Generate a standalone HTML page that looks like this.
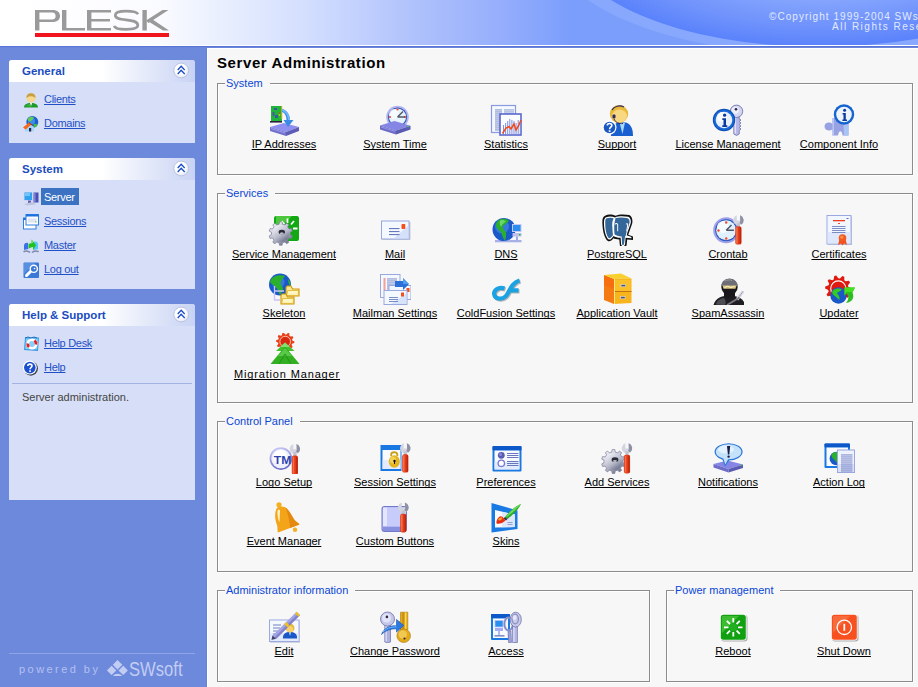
<!DOCTYPE html>
<html><head><meta charset="utf-8">
<style>
*{margin:0;padding:0;box-sizing:border-box}
html,body{width:918px;height:687px;overflow:hidden;background:#6d89dc;font-family:"Liberation Sans",sans-serif;font-size:11px;position:relative;text-decoration-skip-ink:none}
.abs{position:absolute}
#content{position:absolute;left:207px;top:48px;width:711px;height:639px;background:#f7f7f7;border-top:1px solid #fff;border-left:1px solid #fff}
.box{position:absolute;left:9px;width:186px;background:#d6dff7;border-radius:3px 3px 0 0}
.bh{position:absolute;left:0;top:0;width:186px;height:22px;background:linear-gradient(90deg,#fff 0,#fff 50%,#c8d3f4 100%);border-radius:3px 3px 0 0}
.bt{position:absolute;left:13px;top:4px;font-weight:bold;color:#1a4cc0;font-size:11.5px;line-height:14px}
.btn{position:absolute;left:164px;top:2px;width:17px;height:17px}
.lk{position:absolute;left:35px;color:#1f50c5;text-decoration:underline;text-decoration-skip-ink:none;line-height:13px;white-space:nowrap;letter-spacing:-0.3px}
.ic16{position:absolute;left:14px;width:16px;height:16px}
.ic16 svg{display:block}
.fs{position:absolute;border:1px solid #8c8c8c;box-shadow:inset 1px 1px 0 #fff, 1px 1px 0 #fff}
.lg{position:absolute;top:-7px;left:7px;padding:0 7px 0 1px;background:#f7f7f7;color:#0b46d6;line-height:12px;white-space:nowrap}
.ic{position:absolute;width:32px;height:32px}
.ic svg{display:block}
.lb{position:absolute;width:160px;text-align:center;color:#000;text-decoration:underline;text-decoration-skip-ink:none;line-height:13px;white-space:nowrap}
</style></head><body>
<svg class="abs" style="left:0;top:0" width="918" height="48" viewBox="0 0 918 48">
<defs>
<linearGradient id="hg" x1="0" y1="0" x2="918" y2="0" gradientUnits="userSpaceOnUse">
<stop offset="0" stop-color="#ffffff"/>
<stop offset="0.174" stop-color="#fafbff"/>
<stop offset="0.218" stop-color="#eff3fe"/>
<stop offset="0.327" stop-color="#d5e0fe"/>
<stop offset="0.436" stop-color="#b4c5fc"/>
<stop offset="0.545" stop-color="#96aefc"/>
<stop offset="0.62" stop-color="#7b9efc"/>
<stop offset="1" stop-color="#7b9efa"/>
</linearGradient>
<radialGradient id="dk" gradientUnits="userSpaceOnUse" cx="820" cy="-60" r="252.5" gradientTransform="translate(820,-60) scale(1,0.4234) translate(-820,60)">
<stop offset="0.55" stop-color="#85a5fd"/>
<stop offset="0.8" stop-color="#7093fc"/>
<stop offset="1" stop-color="#5a82fb"/>
</radialGradient>
</defs>
<rect width="918" height="45" fill="url(#hg)"/>
<ellipse cx="820" cy="-60" rx="272" ry="115" fill="#87a8fd"/>
<ellipse cx="820" cy="-60" rx="252.5" ry="106.9" fill="url(#dk)"/>
<rect y="45" width="918" height="1" fill="#ffffff"/>
<rect y="46" width="918" height="1" fill="#5b74d7"/>
<rect y="47" width="918" height="1" fill="#6a86dc"/>
<g fill="#9a9a9a">
<path fill-rule="evenodd" d="M35,10 H52.5 C57.6,10 60,12.6 60,16 C60,19.4 57.6,22 52.5,22 H39.4 V30.5 H35 Z M39.4,12.4 H52 C54.8,12.4 55.6,14 55.6,16 C55.6,18 54.8,19.6 52,19.6 H39.4 Z"/>
<path d="M62,10 H66.4 V28 H85 V30.5 H62 Z"/>
<path d="M87,10 H111 V12.5 H91.4 V19 H110 V21.5 H91.4 V28 H111 V30.5 H87 Z"/>
<path d="M142.4,10 H146.8 V30.5 H142.4 Z"/>
<path d="M146,20.5 L162.5,10 L168.5,10 L148.5,23 Z"/>
<path d="M151.5,18.8 L169,30.5 L163,30.5 L148.5,21.5 Z"/>
</g>
<path d="M138,14.2 C137,11.8 132,11.2 126,11.2 C119.5,11.2 115.3,12 115.3,15.2 C115.3,18.6 119.5,19.2 126,19.9 C132.5,20.6 137.8,21.4 137.8,25.2 C137.8,28.6 133,29.3 126,29.3 C119.5,29.3 115,28.8 114.2,25.8" fill="none" stroke="#9a9a9a" stroke-width="2.7"/>
<rect x="35" y="33" width="134" height="4" fill="#f0141e"/>
</svg>
<div class="abs" style="left:769px;top:11px;color:#e2eaff;font-size:10px;line-height:12px;letter-spacing:1.05px;white-space:nowrap">©Copyright 1999-2004 SWsoft, Inc.</div>
<div class="abs" style="left:832px;top:21px;color:#e2eaff;font-size:10px;line-height:12px;letter-spacing:1.5px;white-space:nowrap">All Rights Reserved.</div>
<div class="box" style="top:60px;height:83px">
 <div class="bh"><div class="bt">General</div><div class="btn"><svg width="17" height="17" viewBox="0 0 17 17"><defs><radialGradient id="bg1" cx="0.42" cy="0.38" r="0.62"><stop offset="0.55" stop-color="#fff"/><stop offset="1" stop-color="#e4e8f6"/></radialGradient></defs><circle cx="8.2" cy="8.5" r="7.4" fill="url(#bg1)" stroke="#b4bedd" stroke-width="0.9"/><path d="M4.7,8 L8.2,4.3 L11.7,8 M4.7,12 L8.2,8.3 L11.7,12" fill="none" stroke="#1a4cc8" stroke-width="1.3"/></svg></div></div>
<div class="ic16" style="top:32px"><svg width="16" height="16" viewBox="0 0 16 16"><path d="M1,15.5 C1,12.5 3.5,11 8,11 C12.5,11 15,12.5 15,15.5 Z" fill="#1e9a2a"/><path d="M3,14 C4,12.5 6,12 8,12 L8,15 Z" fill="#50c050" opacity="0.6"/><path d="M7,11 L9,11 L8.2,14 Z" fill="#ffffff"/><circle cx="8" cy="6" r="4.6" fill="#f6d890"/><path d="M3.4,6 C3.4,2.5 5.5,1.2 8,1.2 C10.5,1.2 12.6,2.5 12.6,6 C11,4.5 9,4 7,4.2 C5.5,4.5 4.5,5 3.4,6 Z" fill="#c8a040"/></svg></div><span class="lk" style="top:33px">Clients</span>
<div class="ic16" style="top:56px"><svg width="16" height="16" viewBox="0 0 16 16"><circle cx="9.3" cy="6" r="6" fill="#1a60d0"/><circle cx="8.5" cy="5" r="3.5" fill="#50a0f0" opacity="0.7"/><path d="M6,1.5 C8,0.5 10,0.5 11,1.5 C10,3 9,4 8,5 C7,6 5,5 4.5,3.5 Z" fill="#60d050"/><path d="M10.5,8 C12,7.5 13.5,8 14.5,9 C13.5,11 12,11.5 11,11 Z" fill="#40c040"/><path d="M0.5,11.5 L6,7 L11,11 L11,15.5 L2,15.5 L2,11 Z" fill="#a8d4f8"/><path d="M0,11.5 L6,6.5 L8.5,8.5 L2.5,13.5 Z" fill="#f46818"/><path d="M6,6.5 L9.5,9.5" stroke="#b02810" stroke-width="1"/><rect x="6" y="12" width="2.2" height="3.5" fill="#202850"/></svg></div><span class="lk" style="top:57px">Domains</span>
</div>
<div class="box" style="top:158px;height:131px">
 <div class="bh"><div class="bt">System</div><div class="btn"><svg width="17" height="17" viewBox="0 0 17 17"><defs><radialGradient id="bg2" cx="0.42" cy="0.38" r="0.62"><stop offset="0.55" stop-color="#fff"/><stop offset="1" stop-color="#e4e8f6"/></radialGradient></defs><circle cx="8.2" cy="8.5" r="7.4" fill="url(#bg2)" stroke="#b4bedd" stroke-width="0.9"/><path d="M4.7,8 L8.2,4.3 L11.7,8 M4.7,12 L8.2,8.3 L11.7,12" fill="none" stroke="#1a4cc8" stroke-width="1.3"/></svg></div></div>
<div class="ic16" style="top:32px"><svg width="16" height="16" viewBox="0 0 16 16"><rect x="0.8" y="2" width="9" height="9" fill="#d0d4e8"/><rect x="1.5" y="2.5" width="7.5" height="7.5" fill="#30a0f0"/><rect x="2" y="3" width="5" height="3" fill="#80d0f8" opacity="0.8"/><rect x="10.5" y="2.5" width="5" height="10" fill="#4a50b8"/><rect x="11" y="3" width="1.5" height="9" fill="#8088d8"/><rect x="5" y="10.5" width="3" height="3" fill="#5860c0"/><path d="M1,14 L9,12 L13,14.5 L4,15.5 Z" fill="#c0c4dc"/></svg></div><span class="abs" style="left:32px;top:30px;width:38px;height:17px;background:#3b73c2"></span><span class="lk" style="top:33px;color:#fff;text-decoration:none">Server</span>
<div class="ic16" style="top:56px"><svg width="16" height="16" viewBox="0 0 16 16"><rect x="0.5" y="4" width="12.5" height="11" fill="#ffffff" stroke="#2a80e0" stroke-width="1"/><rect x="0.5" y="4" width="2.5" height="2" fill="#1a70e0"/><rect x="3" y="0.5" width="12.5" height="10.5" fill="#fdfdff" stroke="#2a80e0" stroke-width="1"/><rect x="3" y="0.5" width="12.5" height="2" fill="#1a70e0"/><rect x="5" y="4.5" width="8.5" height="4" fill="#e0e4f4"/><rect x="12" y="7" width="1.5" height="1.5" fill="#90d890"/></svg></div><span class="lk" style="top:57px">Sessions</span>
<div class="ic16" style="top:80px"><svg width="16" height="16" viewBox="0 0 16 16"><path d="M1,8 C1,5 3,4.5 5,5 L5,11 L1,12 Z" fill="#3a70e8"/><path d="M11,3.5 C13,3.5 15,4 15,6 L15,11 L11,12 Z" fill="#50c8f8"/><path d="M0.5,14 C2,12.5 5,12.5 7,14.5" fill="none" stroke="#8088b0" stroke-width="1.5"/><path d="M9,14.5 C11,12.5 14,12.5 15.5,14" fill="none" stroke="#8088b0" stroke-width="1.5"/><path d="M8.5,1.5 L13,7 L10,12.5 L10,9 C8,9 6.5,10 5.5,11 L5.5,6 C6.5,5.5 8,5 10,5 Z" fill="#20c020"/><path d="M8.5,1.5 L10.5,4 L8,6 Z" fill="#60e050"/></svg></div><span class="lk" style="top:81px">Master</span>
<div class="ic16" style="top:104px"><svg width="16" height="16" viewBox="0 0 16 16"><rect x="0.5" y="0.5" width="15.5" height="15.5" rx="1" fill="#3a78d8"/><path d="M1,1 L12,1 L1,12 Z" fill="#6aa0e8" opacity="0.6"/><circle cx="10.8" cy="6.8" r="3.6" fill="none" stroke="#ffffff" stroke-width="1.4"/><circle cx="11.5" cy="6.5" r="0.8" fill="#ffffff"/><path d="M8.5,9.5 L4,14 C3,14.5 2.5,14 3,13 L7.5,8.5" fill="none" stroke="#ffffff" stroke-width="1.6"/></svg></div><span class="lk" style="top:105px">Log out</span>
</div>
<div class="box" style="top:304px;height:196px">
 <div class="bh"><div class="bt">Help &amp; Support</div><div class="btn"><svg width="17" height="17" viewBox="0 0 17 17"><defs><radialGradient id="bg3" cx="0.42" cy="0.38" r="0.62"><stop offset="0.55" stop-color="#fff"/><stop offset="1" stop-color="#e4e8f6"/></radialGradient></defs><circle cx="8.2" cy="8.5" r="7.4" fill="url(#bg3)" stroke="#b4bedd" stroke-width="0.9"/><path d="M4.7,8 L8.2,4.3 L11.7,8 M4.7,12 L8.2,8.3 L11.7,12" fill="none" stroke="#1a4cc8" stroke-width="1.3"/></svg></div></div>
<div class="ic16" style="top:32px"><svg width="16" height="16" viewBox="0 0 16 16"><path d="M2,1.5 L16,1.5 L15,15 L1,14 Z" fill="#3a98e0"/><path d="M3,2.5 L15,2.5 L14.2,13.5 L2.2,13 Z" fill="#88d0f8"/><path d="M2,2 L5,1 L8,2 L11,1 L14,2" stroke="#1a70c0" stroke-width="1" fill="none"/><circle cx="9" cy="8" r="4.2" fill="none" stroke="#ffffff" stroke-width="2.6"/><path d="M11.5,4.5 A4.2,4.2 0 0 1 13,8.5 M6,11 A4.2,4.2 0 0 1 4.8,7.5" fill="none" stroke="#f01818" stroke-width="2.6"/></svg></div><span class="lk" style="top:33px">Help Desk</span>
<div class="ic16" style="top:56px"><svg width="16" height="16" viewBox="0 0 16 16"><circle cx="7.8" cy="8.5" r="7.2" fill="#404858"/><circle cx="6.8" cy="7.6" r="7" fill="#ffffff"/><circle cx="6.8" cy="7.6" r="5.8" fill="#1a50d0"/><path d="M4.8,6 C4.8,3.5 9,3.5 9,5.8 C9,7.5 7,7.5 7,9.3" fill="none" stroke="#ffffff" stroke-width="1.6"/><rect x="6.2" y="10.3" width="1.7" height="1.6" fill="#ffffff"/></svg></div><span class="lk" style="top:57px">Help</span>
 <div class="abs" style="left:3px;top:79px;width:180px;height:1px;background:#a3b4e3"></div>
 <div class="abs" style="left:13px;top:87px;color:#444;line-height:13px">Server administration.</div>
</div>
<div class="abs" style="left:9px;top:653px;width:186px;height:1px;background:#8ea4e6"></div>
<div class="abs" style="left:19px;top:662px;color:#b2c0f0;font-size:11px;line-height:14px;letter-spacing:2.45px;white-space:nowrap">powered by</div>
<svg class="abs" style="left:104px;top:656px" width="84" height="24" viewBox="0 0 84 24"><g fill="#c2cdf4"><path d="M13.5,4 L18.3,8.7 L13.5,13.4 L8.8,8.7 Z"/><path d="M7.6,9.7 L12.3,14.4 L7.6,19.1 L2.9,14.4 Z"/><path d="M19.2,9.7 L23.9,14.4 L19.2,19.1 L14.5,14.4 Z"/><path d="M9,20 C11,17 16,17 18,20 Z"/></g><text x="25" y="19.8" font-family="Liberation Sans" font-size="20" fill="#c2cdf4" textLength="53.5" lengthAdjust="spacingAndGlyphs">SWsoft</text></svg>
<div id="content"></div><div class="abs" style="left:206px;top:48px;width:1px;height:639px;background:#6483da"></div>
<div class="abs" style="left:217px;top:54px;font-size:15px;font-weight:bold;color:#000;line-height:17px;letter-spacing:0.6px">Server Administration</div>
<div class="fs" style="left:217px;top:83px;width:696px;height:92px"><span class="lg">System</span></div>
<div class="fs" style="left:217px;top:193px;width:696px;height:210px"><span class="lg">Services</span></div>
<div class="fs" style="left:217px;top:421px;width:696px;height:151px"><span class="lg">Control Panel</span></div>
<div class="fs" style="left:217px;top:590px;width:433px;height:92px"><span class="lg">Administrator information</span></div>
<div class="fs" style="left:666px;top:590px;width:247px;height:92px"><span class="lg">Power management</span></div>
<div class="ic" style="left:268px;top:104px"><svg width="32" height="32" viewBox="0 0 32 32"><path d="M2,23 L16,19 L31,23 L18,28 Z" fill="#8e8ff0"/><path d="M2,23 L18,28 L18,32 L2,27 Z" fill="#7070cc"/><path d="M18,28 L31,23 L31,27 L18,32 Z" fill="#5d5db8"/><path d="M3,24.5 L17,29" stroke="#a8a8f0" stroke-width="0.8"/><rect x="3" y="2" width="11" height="15" fill="#1fb53a"/><rect x="13.3" y="2" width="1" height="13" fill="#f0b020"/><rect x="6" y="4" width="3" height="2" fill="#3a5aa0"/><rect x="4.5" y="8" width="2" height="4" fill="#4a5aa0"/><rect x="7" y="11" width="3" height="3" fill="#3a5aa0"/><circle cx="11.5" cy="9" r="0.8" fill="#e04020"/><circle cx="11.5" cy="11" r="0.8" fill="#f0e020"/><rect x="2" y="17" width="12" height="1.6" fill="#302040"/><path d="M14,5 C19,6 22,11 22,16 L25.5,16 L20,23 L15.5,16 L18.5,16 C18.5,12 17,9 14,8 Z" fill="#3b8be6"/><path d="M14,5 C19,6 22,11 22,16 L20,16 C20,11 17,8 14,7 Z" fill="#6fb6f8"/></svg></div>
<div class="lb" style="left:204px;top:138px;">IP Addresses</div>
<div class="ic" style="left:379px;top:104px"><svg width="32" height="32" viewBox="0 0 32 32"><circle cx="18.5" cy="13" r="11.3" fill="#b4b6ee"/><circle cx="18.5" cy="13" r="9.6" fill="#2f55b8"/><circle cx="18.5" cy="13" r="8.6" fill="#e6f2fc"/><circle cx="15" cy="10" r="5" fill="#ffffff" opacity="0.7"/><circle cx="18.5" cy="5.5" r="1.1" fill="#f04a2a"/><circle cx="11" cy="13" r="1.1" fill="#f04a2a"/><circle cx="26" cy="13" r="1.1" fill="#e04a2a"/><path d="M18.5,13 L24,7.5 M18.5,13 L26,13" stroke="#505868" stroke-width="1.4"/><path d="M1,21.5 L15.5,17 L31.5,21.8 L17,26.5 Z" fill="#8585e6"/><path d="M1,21.5 L17,26.5 L17,30.5 L1,25.5 Z" fill="#6d6dc8"/><path d="M17,26.5 L31.5,21.8 L31.5,25.5 L17,30.5 Z" fill="#5a5ab2"/><path d="M2,23 L16,27.3" stroke="#a0a0ee" stroke-width="0.8"/><circle cx="29" cy="22.5" r="0.8" fill="#40d040"/></svg></div>
<div class="lb" style="left:315px;top:138px;">System Time</div>
<div class="ic" style="left:490px;top:104px"><svg width="32" height="32" viewBox="0 0 32 32"><rect x="1.5" y="1.5" width="24" height="27" fill="#f4f8ff" stroke="#8a9ae0" stroke-width="1.2"/><rect x="5" y="5.5" width="7" height="0.9" fill="#7080c0"/><rect x="5" y="7.5" width="7" height="0.9" fill="#7080c0"/><rect x="5" y="9.5" width="7" height="0.9" fill="#7080c0"/><rect x="5" y="11.5" width="7" height="0.9" fill="#7080c0"/><rect x="5" y="13.5" width="7" height="0.9" fill="#7080c0"/><rect x="5" y="15.5" width="7" height="0.9" fill="#7080c0"/><rect x="5" y="17.5" width="7" height="0.9" fill="#7080c0"/><rect x="5" y="19.5" width="7" height="0.9" fill="#7080c0"/><rect x="5" y="21.5" width="7" height="0.9" fill="#7080c0"/><rect x="5" y="23.5" width="7" height="0.9" fill="#7080c0"/><rect x="5" y="25.5" width="7" height="0.9" fill="#7080c0"/><rect x="14" y="5.5" width="10" height="0.9" fill="#8090c8"/><rect x="14" y="7.5" width="10" height="0.9" fill="#8090c8"/><rect x="14" y="9.5" width="10" height="0.9" fill="#8090c8"/><rect x="10" y="10" width="21" height="21" fill="#fbfcff" stroke="#5a68d0" stroke-width="1.6"/><rect x="13.0" y="21" width="1" height="9" fill="#7f8fe0"/><rect x="15.1" y="19" width="1" height="11" fill="#7f8fe0"/><rect x="17.2" y="17" width="1" height="13" fill="#7f8fe0"/><rect x="19.3" y="15" width="1" height="15" fill="#7f8fe0"/><rect x="21.4" y="16" width="1" height="14" fill="#7f8fe0"/><rect x="23.5" y="17" width="1" height="13" fill="#7f8fe0"/><rect x="25.6" y="19" width="1" height="11" fill="#7f8fe0"/><rect x="27.700000000000003" y="16" width="1" height="14" fill="#7f8fe0"/><rect x="29.8" y="18" width="1" height="12" fill="#7f8fe0"/><rect x="31.900000000000002" y="21" width="1" height="9" fill="#7f8fe0"/><rect x="34.0" y="15" width="1" height="15" fill="#7f8fe0"/><rect x="36.1" y="18" width="1" height="12" fill="#7f8fe0"/><path d="M12.5,29.5 L16,24 L19,22.5 L21,25 L24,20 L26,26 L28.5,22 L31,16" fill="none" stroke="#f04a1a" stroke-width="1.5"/></svg></div>
<div class="lb" style="left:426px;top:138px;">Statistics</div>
<div class="ic" style="left:601px;top:104px"><svg width="32" height="32" viewBox="0 0 32 32"><path d="M10,32 C10,22 14,18 21,18 C28,18 32,22 32,32 Z" fill="#1a5fcf"/><path d="M18.5,18.5 L24,18.5 L21.5,30 Z" fill="#a8d8f8"/><ellipse cx="18" cy="10" rx="9.2" ry="9" fill="#e8b838"/><ellipse cx="18.5" cy="12" rx="7.5" ry="6.5" fill="#f8d880"/><path d="M11,6 C13,2 19,1 23,3" fill="none" stroke="#302860" stroke-width="1.2"/><rect x="11.5" y="10.5" width="3" height="4" rx="1" fill="#302860"/><path d="M13,15 C15,19 18,20 22,19.5" fill="none" stroke="#302860" stroke-width="1"/><circle cx="8.5" cy="23.5" r="7" fill="#ffffff"/><circle cx="8.5" cy="23.5" r="5.8" fill="#1a58c0"/><path d="M6.3,21.5 C6.3,18.8 10.8,18.8 10.8,21.5 C10.8,23.3 8.6,23.2 8.6,25.2" fill="none" stroke="#fff" stroke-width="1.6"/><rect x="7.7" y="26.3" width="1.8" height="1.6" fill="#fff"/></svg></div>
<div class="lb" style="left:537px;top:138px;">Support</div>
<div class="ic" style="left:712px;top:104px"><svg width="32" height="32" viewBox="0 0 32 32"><path d="M21.8,12 L27.2,12 L27.2,15 L29,16 L27.2,17.5 L29,19 L27.2,20.5 L29,22 L27.2,23.5 L29,25 L27.2,26.5 L27.2,30 L24.5,31.5 L21.8,30 Z" fill="#b6b9e6" stroke="#6a6ea6" stroke-width="0.8"/><rect x="22.6" y="12.5" width="1.3" height="17" fill="#e4e6fa"/><circle cx="24.5" cy="7.3" r="6.2" fill="#d4d6f2" stroke="#7074aa" stroke-width="0.9"/><circle cx="23.3" cy="6.3" r="3.6" fill="#eeeefc"/><circle cx="24" cy="5.3" r="1.3" fill="#2a2a40"/><circle cx="12" cy="16" r="11.2" fill="#0d4fb8"/><circle cx="12" cy="16" r="10.2" fill="#1a6ad8"/><circle cx="12" cy="16" r="8.3" fill="#e8f0fc"/><circle cx="10" cy="13" r="5" fill="#ffffff" opacity="0.8"/><circle cx="12.6" cy="11.2" r="1.6" fill="#0a3aa0"/><path d="M10.3,14.3 L14,14.3 L14,21.3 L15.3,21.3 L15.3,22.9 L10.3,22.9 L10.3,21.3 L11.5,21.3 L11.5,15.9 L10.3,15.9 Z" fill="#0a3aa0"/></svg></div>
<div class="lb" style="left:648px;top:138px;">License Management</div>
<div class="ic" style="left:823px;top:104px"><svg width="32" height="32" viewBox="0 0 32 32"><path d="M9.5,14 L25.5,14 L25.5,31.5 L19.5,31.5 C19.5,27 16,25 15,31.5 L9.5,31.5 L9.5,25.5 C6,28 1.5,26 1.5,22.5 C1.5,19 6,17 9.5,20 Z" fill="#98a2e2"/><path d="M9.5,14 L11,14 L11,31.5 L9.5,31.5 Z" fill="#b8c4f4"/><path d="M20.5,20 L25.5,20 L25.5,31.5 L21,31.5 Z" fill="#a8c4f4"/><circle cx="21" cy="10.5" r="10.2" fill="#1565d0"/><circle cx="21" cy="10.5" r="7.8" fill="#eef4fc"/><circle cx="21.6" cy="6.2" r="1.5" fill="#0a3aa0"/><path d="M19.6,9 L22.8,9 L22.8,15.5 L24,15.5 L24,16.9 L19.4,16.9 L19.4,15.5 L20.5,15.5 L20.5,10.4 L19.6,10.4 Z" fill="#0a3aa0"/></svg></div>
<div class="lb" style="left:759px;top:138px;">Component Info</div>
<div class="ic" style="left:268px;top:214px"><svg width="32" height="32" viewBox="0 0 32 32"><rect x="5.5" y="1.5" width="26" height="26" rx="2.5" fill="#ffffff"/><rect x="6" y="2" width="25" height="25" rx="2" fill="#12a812"/><path d="M8,2 L24,2 L8,18 Z" fill="#5cd04a" opacity="0.8"/><path d="M19.5,4.5 L19.5,9 M13.5,7 L16.5,10.5 M26,7 L23,10.5 M25,14.5 L29.5,14.5" stroke="#ffffff" stroke-width="1.8"/><defs><linearGradient id="g_svc" x1="0.2" y1="0.1" x2="0.8" y2="0.95"><stop offset="0" stop-color="#ececf4"/><stop offset="0.55" stop-color="#b8bacb"/><stop offset="1" stop-color="#6c6e88"/></linearGradient></defs><polygon points="11.14,10.15 11.47,7.78 14.13,7.78 14.46,10.15 16.95,10.96 18.61,9.23 20.77,10.80 19.64,12.91 21.18,15.03 23.54,14.61 24.36,17.14 22.21,18.19 22.21,20.81 24.36,21.86 23.54,24.39 21.18,23.97 19.64,26.09 20.77,28.20 18.61,29.77 16.95,28.04 14.46,28.85 14.13,31.22 11.47,31.22 11.14,28.85 8.65,28.04 6.99,29.77 4.83,28.20 5.96,26.09 4.42,23.97 2.06,24.39 1.24,21.86 3.39,20.81 3.39,18.19 1.24,17.14 2.06,14.61 4.42,15.03 5.96,12.91 4.83,10.80 6.99,9.23 8.65,10.96" fill="url(#g_svc)" stroke="#7a7c96" stroke-width="0.7"/><circle cx="12.8" cy="19.5" r="8.5" fill="url(#g_svc)"/><ellipse cx="13.8" cy="18.0" rx="3.2" ry="2.2" fill="#2a2a38"/><ellipse cx="13.8" cy="19.21" rx="1.92" ry="0.66" fill="#f4f4fa"/></svg></div>
<div class="lb" style="left:204px;top:248px;">Service Management</div>
<div class="ic" style="left:379px;top:214px"><svg width="32" height="32" viewBox="0 0 32 32"><rect x="3.5" y="8" width="28" height="18" fill="#b0b4c8" opacity="0.6"/><rect x="2.5" y="7" width="27.5" height="18" fill="#f4f8ff" stroke="#98a6dc" stroke-width="1"/><path d="M14,25 L30,25 L30,11 Z" fill="#c8d6f8" opacity="0.7"/><rect x="22.5" y="10" width="3.8" height="5" rx="0.8" fill="#f4501e"/><rect x="10" y="14" width="10.5" height="1.1" fill="#6878b8"/><rect x="10" y="17" width="10.5" height="1.1" fill="#6878b8"/><rect x="10" y="20" width="10.5" height="1.1" fill="#6878b8"/></svg></div>
<div class="lb" style="left:315px;top:248px;">Mail</div>
<div class="ic" style="left:490px;top:214px"><svg width="32" height="32" viewBox="0 0 32 32"><rect x="5" y="26" width="26.5" height="2.3" fill="#a8b0e8"/><circle cx="14" cy="15.5" r="11.5" fill="#1a5ac8"/><circle cx="12" cy="12.5" r="7" fill="#4a90e8" opacity="0.6"/><path d="M9,6 C12,4 17,4.5 19,7 C17,9 16,10 14,11 C12,12 13,15 15,17 C17,19 16,23 15,27 C13,24 12,21 11,18 C9,16 7,15 6,12 C6,9 7,7 9,6 Z" fill="#2ab02a"/><path d="M10,6.5 C12,5.5 15,6 16,7.5 C14,9 12,10 11,13 C10,11 9,9 10,6.5 Z" fill="#7ee07a" opacity="0.8"/><rect x="22" y="10" width="9.5" height="8" fill="#c4c8f4"/><rect x="23" y="11" width="7.5" height="6" fill="#2a8ef0"/><rect x="22.5" y="19" width="9" height="3.5" fill="#c0c0f0"/><rect x="29" y="20" width="1.5" height="1.5" fill="#20c020"/><rect x="26" y="22.5" width="2" height="4" fill="#a0a8e0"/></svg></div>
<div class="lb" style="left:426px;top:248px;">DNS</div>
<div class="ic" style="left:601px;top:214px"><svg width="32" height="32" viewBox="0 0 32 32"><g transform="translate(-1.27,-2.37) scale(1.056,1.158)"><path d="M5,3.5 C8,2 12,2.5 15,3.5 C18,2.2 24,2.2 28,3 C31,4.5 31.5,8 30.5,11 C29.5,14 28,17 27,20 L31.5,21.5 L31.5,24.5 L26,24 L25.5,28.5 C25,32 19.5,32.5 19,28.5 L18.5,24 C16,24 14,23.5 13,23 C11.5,25 9.5,26 8,25.5 C4,23.5 2.5,15 2.5,9 C2.5,6 3,4.5 5,3.5 Z" fill="#111"/><path d="M6,4.8 C9,3.8 12,4 14.5,5 C17.5,3.8 23,3.8 27,4.5 C29.5,5.5 30,8.5 29,11 C28,14 26.5,17 25.5,20.5 L30,22 L30,23 L24.5,22.5 L24,28 C23.7,30.5 20.5,30.5 20.2,28 L19.8,22.5 C17,22.5 14.5,22 13,21 C11.5,23.5 9.5,24.5 8.5,24 C5.5,22 4,15 4,9.5 C4,7 4.5,5.5 6,4.8 Z" fill="#ffffff"/><path d="M6.5,5.8 C9,5 11.5,5.2 13.2,5.8 C12,8 11.5,10 12,14 C12,16.5 12.5,19 12.5,20.5 C11,22.5 9.5,23.3 8.8,23 C6.3,21 5.2,15 5.2,9.8 C5.2,7.5 5.5,6.3 6.5,5.8 Z" fill="#336699"/><path d="M15,5.6 C19,4.8 23,5 26.5,5.7 C28.5,6.5 28.7,9 27.8,11 C26.8,14 25.2,17.5 24.5,21.2 L24,21.2 L23,28 C22.8,29.3 21.3,29.3 21.1,28 L20.8,21.5 C18,21.3 15,20.5 14,19.5 C13.5,15 13.5,10 15,5.6 Z" fill="#336699"/><path d="M14.5,11 C15,10 16.5,10 17,11 L17,17 M25,11 C25.5,10 26.5,10.5 26.5,11.5 L25.5,17" fill="none" stroke="#ffffff" stroke-width="0.9"/></g></svg></div>
<div class="lb" style="left:537px;top:248px;">PostgreSQL</div>
<div class="ic" style="left:712px;top:214px"><svg width="32" height="32" viewBox="0 0 32 32"><circle cx="14.2" cy="16.3" r="13" fill="#9ea0ec"/><circle cx="14.2" cy="16.3" r="11" fill="#2a58b8"/><circle cx="14.2" cy="16.3" r="10" fill="#e0f0fc"/><circle cx="11" cy="13" r="6" fill="#ffffff" opacity="0.7"/><circle cx="14.2" cy="8.5" r="1.2" fill="#f04a2a"/><circle cx="6.5" cy="16.5" r="1.2" fill="#f04a2a"/><circle cx="14.2" cy="24.5" r="1.2" fill="#f04a2a"/><path d="M14.2,16.3 L19.5,11 M14.2,16.3 L22,16.3" stroke="#505868" stroke-width="1.5"/><path d="M24.80,1.35 A5.2,5.2 0 1 0 28.00,1.35 L28.00,6.60 L24.80,6.60 Z" fill="#d4d5e0"/><path d="M28.00,1.35 A5.2,5.2 0 0 1 29.52,10.46 L27.400000000000002,8.90 A3.12,3.12 0 0 0 28.20,6.00 Z" fill="#8e90a4"/><rect x="24.80" y="9.42" width="3.2" height="3.88" fill="#c0c2d0"/><rect x="23.3" y="12.3" width="6.2" height="18.3" rx="2.2" fill="#e03c18"/><rect x="24.1" y="13.3" width="1.6" height="16.3" fill="#f87a58" opacity="0.8"/><rect x="27.700000000000003" y="13.3" width="1.4" height="16.3" fill="#b02010" opacity="0.8"/></svg></div>
<div class="lb" style="left:648px;top:248px;">Crontab</div>
<div class="ic" style="left:823px;top:214px"><svg width="32" height="32" viewBox="0 0 32 32"><rect x="5" y="2.5" width="24" height="28.5" fill="#a4a8c8" opacity="0.6"/><rect x="4" y="1.5" width="24" height="28.5" fill="#f2f6fe" stroke="#9aaae0" stroke-width="1"/><path d="M4.5,18 L27.5,18 L27.5,29.5 L4.5,29.5 Z" fill="#d8e4fa" opacity="0.8"/><rect x="10" y="6" width="12" height="1.3" fill="#f03a1a"/><rect x="15" y="9" width="2" height="1" fill="#f04a2a"/><rect x="23.5" y="4" width="2" height="1" fill="#6070c0"/><rect x="9" y="12" width="13.5" height="0.9" fill="#7080c0"/><rect x="9" y="14" width="13.5" height="0.9" fill="#7080c0"/><rect x="9" y="16" width="13.5" height="0.9" fill="#7080c0"/><rect x="9" y="18" width="13.5" height="0.9" fill="#7080c0"/><path d="M16.5,25 L15,31 L18,29.5 L19.5,31.5 L21,29.5 L24,31 L22.5,25 Z" fill="#f0501e"/><circle cx="19.5" cy="24" r="3.8" fill="#f25a20"/><circle cx="18.8" cy="23.2" r="1.6" fill="#f89040"/></svg></div>
<div class="lb" style="left:759px;top:248px;">Certificates</div>
<div class="ic" style="left:268px;top:273px"><svg width="32" height="32" viewBox="0 0 32 32"><circle cx="12" cy="11.5" r="11" fill="#1a5ac8"/><circle cx="10" cy="9" r="6.5" fill="#4a90e8" opacity="0.6"/><path d="M5,4.5 C8,2 13,1.5 17,3 C16,5 14,6 13,8 C12,10 13,13 15,15 C15,18 13,20 12,22 C10,19 10,16 8,14 C6,12 3,11 2,9 C2.5,7 3.5,5.5 5,4.5 Z" fill="#2ab02a"/><path d="M20,6 C22,8 23,11 22.5,13 C21,12 20,9 20,6 Z" fill="#2ab02a"/><path d="M6.5,13 L6.5,27 L12,27 M6.5,18 L16,18" fill="none" stroke="#c8c4f8" stroke-width="1.3"/><path d="M18,14.5 L18,23 L31,23 L31,16 L24.5,16 L23,13 L19,13 Z" fill="#fbe890" stroke="#d09808" stroke-width="1.1"/><path d="M18.6,22.4 L19.8,17.5 L30.4,17.5 L30.4,22.4 Z" fill="#fff6c0" stroke="#d8a818" stroke-width="0.7"/><path d="M13,22.5 L13,31 L26,31 L26,24 L19.5,24 L18,21 L14,21 Z" fill="#fbe890" stroke="#d09808" stroke-width="1.1"/><path d="M13.6,30.4 L14.8,25.5 L25.4,25.5 L25.4,30.4 Z" fill="#fff6c0" stroke="#d8a818" stroke-width="0.7"/></svg></div>
<div class="lb" style="left:204px;top:307px;">Skeleton</div>
<div class="ic" style="left:379px;top:273px"><svg width="32" height="32" viewBox="0 0 32 32"><rect x="1.5" y="1.5" width="19.5" height="23" fill="#f4f8ff" stroke="#9aa8e0" stroke-width="1"/><rect x="4.5" y="5.5" width="2" height="1" fill="#f04a2a"/><rect x="8" y="5.5" width="10" height="0.9" fill="#7080c0"/><rect x="4.5" y="7.5" width="2" height="1" fill="#f04a2a"/><rect x="8" y="7.5" width="10" height="0.9" fill="#7080c0"/><rect x="4.5" y="9.5" width="2" height="1" fill="#f04a2a"/><rect x="8" y="9.5" width="10" height="0.9" fill="#7080c0"/><rect x="4.5" y="11.5" width="2" height="1" fill="#f04a2a"/><rect x="8" y="11.5" width="10" height="0.9" fill="#7080c0"/><rect x="4.5" y="13.5" width="2" height="1" fill="#f04a2a"/><rect x="8" y="13.5" width="10" height="0.9" fill="#7080c0"/><rect x="4.5" y="15.5" width="2" height="1" fill="#f04a2a"/><rect x="8" y="15.5" width="10" height="0.9" fill="#7080c0"/><rect x="10" y="12.5" width="22" height="14" fill="#f2f6ff" stroke="#9aa8e0" stroke-width="1"/><rect x="27.5" y="15" width="3" height="4" fill="#f4501e"/><path d="M16,8 L24,8 L24,5 L30,11 L24,17 L24,14 L16,14 Z" fill="#2a70d8"/><path d="M24,5 L30,11 L24,11 Z" fill="#60b0f8" opacity="0.7"/><rect x="5" y="17.5" width="23" height="14" fill="#f4f8ff" stroke="#9aa8e0" stroke-width="1"/><path d="M12,31 L27.5,31 L27.5,20 Z" fill="#d0dcfa" opacity="0.8"/><rect x="22" y="19.5" width="3" height="4" fill="#f4501e"/><rect x="10" y="24" width="9" height="0.9" fill="#7080c0"/><rect x="10" y="26" width="9" height="0.9" fill="#7080c0"/><rect x="10" y="28" width="9" height="0.9" fill="#7080c0"/></svg></div>
<div class="lb" style="left:315px;top:307px;">Mailman Settings</div>
<div class="ic" style="left:490px;top:273px"><svg width="32" height="32" viewBox="0 0 32 32"><g transform="translate(1,1)" opacity="0.45"><path d="M14.5,15.5 C8,13.5 3.5,17.5 4.2,21.5 C5,26.5 12,26.5 15.5,23.5 C19.5,20 20.5,10 29.5,7.5 M19.5,17.3 L28.5,17.3" fill="none" stroke="#606060" stroke-width="4.2"/></g><path d="M14.5,15.5 C8,13.5 3.5,17.5 4.2,21.5 C5,26.5 12,26.5 15.5,23.5 C19.5,20 20.5,10 29.5,7.5 M19.5,17.3 L28.5,17.3" fill="none" stroke="#1ba2e2" stroke-width="4.2"/></svg></div>
<div class="lb" style="left:426px;top:307px;">ColdFusion Settings</div>
<div class="ic" style="left:601px;top:273px"><svg width="32" height="32" viewBox="0 0 32 32"><path d="M3,2 L13,6 L13,31 L3,27 Z" fill="#f47a14"/><path d="M3,2 L13,6 L13,16 L3,12 Z" fill="#f86a10" opacity="0.7"/><path d="M3,2 L20,0.5 L30.5,5.5 L13,6 Z" fill="#f8d030"/><path d="M13,6 L30.5,5.5 L30.5,30 L13,31 Z" fill="#f8b41c"/><path d="M14,7 L29.5,6.8 L29.5,18 L14,18.3 Z" fill="#fac028"/><rect x="13" y="18" width="17.5" height="1" fill="#c87010"/><rect x="13" y="6" width="1" height="25" fill="#ffe880"/><rect x="20" y="11.5" width="4.6" height="2.3" fill="#505070" stroke="#e0e0f0" stroke-width="0.6"/><rect x="19.7" y="23.5" width="4.4" height="2.3" fill="#505070" stroke="#e0e0f0" stroke-width="0.6"/></svg></div>
<div class="lb" style="left:537px;top:307px;">Application Vault</div>
<div class="ic" style="left:712px;top:273px"><svg width="32" height="32" viewBox="0 0 32 32"><path d="M1.5,32 C3,26 8,23.5 13,23 L22,23 C28,23.5 32,27 33,32 Z" fill="#1e1e22"/><path d="M4,31.5 C5,27.5 8,25.5 12,25 C14,27 14,30 13,32 Z" fill="#606068" opacity="0.7"/><rect x="12" y="18" width="11" height="7" fill="#1a1a1e"/><circle cx="17.5" cy="14" r="8.2" fill="#18181c"/><path d="M9.4,13 C9.6,8 13,5.8 17.5,5.8 C22,5.8 25.5,8.5 25.6,13 Z" fill="#6e6e76"/><path d="M12,8 C14,6.8 18,6.5 20,7.5" stroke="#9a9aa2" stroke-width="1" fill="none"/><path d="M10.5,12.5 L24.5,12.5 L23.5,15.8 L11.5,15.8 Z" fill="#d8c080"/><path d="M12.5,14.5 L15.5,13.3 L19,14.5 L22.5,13.3" stroke="#fff4c8" stroke-width="1" fill="none"/><path d="M31,18.5 L25,26.5" stroke="#dcdce6" stroke-width="3"/><path d="M31,18.5 L25,26.5" stroke="#70708a" stroke-width="1" stroke-dasharray="1.2,1.2"/><path d="M15,32 L27.5,24.5" stroke="#707080" stroke-width="2"/><path d="M15,32 L27.5,24.5" stroke="#b8a070" stroke-width="0.6" stroke-dasharray="1,2"/></svg></div>
<div class="lb" style="left:648px;top:307px;">SpamAssassin</div>
<div class="ic" style="left:823px;top:273px"><svg width="32" height="32" viewBox="0 0 32 32"><polygon points="28.50,15.50 28.34,17.56 25.00,18.65 24.39,20.13 25.98,23.26 24.63,24.83 21.30,23.75 19.93,24.59 19.38,28.05 17.36,28.54 15.30,25.70 13.70,25.57 11.22,28.05 9.31,27.26 9.30,23.75 8.09,22.71 4.62,23.26 3.54,21.49 5.60,18.65 5.23,17.10 2.10,15.50 2.26,13.44 5.60,12.35 6.21,10.87 4.62,7.74 5.97,6.17 9.30,7.25 10.67,6.41 11.22,2.95 13.24,2.46 15.30,5.30 16.90,5.43 19.38,2.95 21.29,3.74 21.30,7.25 22.51,8.29 25.98,7.74 27.06,9.51 25.00,12.35 25.37,13.90" fill="#e01a10"/><circle cx="15.3" cy="15.5" r="9.399999999999999" fill="#e01a10"/><circle cx="12.240000000000002" cy="12.440000000000001" r="5.1" fill="#e01a10" opacity="0"/><circle cx="15.3" cy="15.5" r="0" fill="#e01a10"/><circle cx="15.3" cy="15.5" r="7.6" fill="none" stroke="#ffffff" stroke-width="1.1"/><circle cx="15.5" cy="22.5" r="8.2" fill="#1a58c8"/><path d="M10,17.5 C13,15 17,15 19,16.5 C17,18.5 15,19 14,20 C15,22 17,23 16.5,27 C14,25 12,23 10,21.5 C9,20 9,18.5 10,17.5 Z" fill="#33cc22"/><path d="M21.5,14.5 L32,14.5 L29.5,19.5 C31.5,24 30,29 23,30 C26,27 26,23 23.5,20.5 L21.5,23 Z" fill="#2ebd20"/><path d="M21.5,14.5 L32,14.5 L29.5,19 L23.5,19 L21.5,22 Z" fill="#44e020"/></svg></div>
<div class="lb" style="left:759px;top:307px;">Updater</div>
<div class="ic" style="left:268px;top:333px"><svg width="32" height="32" viewBox="0 0 32 32"><polygon points="26.40,8.60 26.29,10.04 24.05,10.82 23.62,11.87 24.64,14.01 23.71,15.11 21.43,14.42 20.47,15.02 20.04,17.35 18.64,17.69 17.20,15.80 16.07,15.71 14.36,17.35 13.02,16.80 12.97,14.42 12.11,13.69 9.76,14.01 9.00,12.78 10.35,10.82 10.09,9.73 8.00,8.60 8.11,7.16 10.35,6.38 10.78,5.33 9.76,3.19 10.69,2.09 12.97,2.78 13.93,2.18 14.36,-0.15 15.76,-0.49 17.20,1.40 18.33,1.49 20.04,-0.15 21.38,0.40 21.43,2.78 22.29,3.51 24.64,3.19 25.40,4.42 24.05,6.38 24.31,7.47" fill="#e8401a"/><circle cx="17.2" cy="8.6" r="6.4" fill="#e8401a"/><circle cx="15.04" cy="6.4399999999999995" r="3.6" fill="#e8401a" opacity="0"/><circle cx="17.2" cy="8.6" r="0" fill="#e8401a"/><circle cx="17.2" cy="8.6" r="5.3" fill="#d82810" stroke="#f8c8b8" stroke-width="0.9"/><path d="M17,9.5 L26.5,18 L8,18 Z" fill="#44c02a"/><path d="M17,13.5 L31.5,31 L2.5,31 Z" fill="#33b022"/><path d="M17,9.5 L22,14 L12,14 Z" fill="#80e070"/><path d="M17,15 L24,23 L10,23 Z" fill="#60d050" opacity="0.8"/><path d="M11,31 L17,21 L23,31" fill="none" stroke="#1e8a18" stroke-width="0.8"/></svg></div>
<div class="lb" style="left:207px;top:368px;letter-spacing:0.85px">Migration Manager</div>
<div class="ic" style="left:268px;top:442px"><svg width="32" height="32" viewBox="0 0 32 32"><defs><linearGradient id="lg_logo" x1="0.3" y1="0" x2="0.6" y2="1"><stop offset="0" stop-color="#c8caf4"/><stop offset="1" stop-color="#6466c4"/></linearGradient></defs><circle cx="12.9" cy="16.6" r="11.3" fill="url(#lg_logo)"/><circle cx="12.9" cy="16.6" r="9.6" fill="#eef0fe"/><circle cx="12" cy="15" r="7" fill="#ffffff"/><text x="5.8" y="21.6" font-family="Liberation Sans" font-weight="bold" font-size="11.5" fill="#2a44b0" textLength="17.5" lengthAdjust="spacingAndGlyphs">TM</text><path d="M25.30,2.06 A5.1,5.1 0 1 0 28.50,2.06 L28.50,7.20 L25.30,7.20 Z" fill="#d4d5e0"/><path d="M28.50,2.06 A5.1,5.1 0 0 1 29.96,10.98 L27.900000000000002,9.45 A3.0599999999999996,3.0599999999999996 0 0 0 28.70,6.60 Z" fill="#8e90a4"/><rect x="25.30" y="9.96" width="3.2" height="4.64" fill="#c0c2d0"/><rect x="23.8" y="13.6" width="6.2" height="19" rx="2.2" fill="#e03c18"/><rect x="24.6" y="14.6" width="1.6" height="17" fill="#f87a58" opacity="0.8"/><rect x="28.200000000000003" y="14.6" width="1.4" height="17" fill="#b02010" opacity="0.8"/></svg></div>
<div class="lb" style="left:204px;top:476px;">Logo Setup</div>
<div class="ic" style="left:379px;top:442px"><svg width="32" height="32" viewBox="0 0 32 32"><rect x="1.5" y="3" width="21" height="26" fill="#1a78e2"/><rect x="3.5" y="8" width="18" height="19" fill="#f8faff"/><rect x="3.5" y="18" width="18" height="9" fill="#dce6fa" opacity="0.8"/><path d="M12.2,14 L12.2,12.5 C12.2,9.5 18.3,9.5 18.3,12.5 L18.3,14" fill="none" stroke="#c8a018" stroke-width="1.8"/><ellipse cx="15.3" cy="19.5" rx="5.5" ry="6.2" fill="#e4b420"/><ellipse cx="14" cy="18" rx="3" ry="3.5" fill="#f8d860" opacity="0.8"/><circle cx="15.5" cy="19" r="1.2" fill="#101010"/><rect x="15" y="19" width="1" height="3" fill="#101010"/><path d="M24.70,1.35 A5.2,5.2 0 1 0 27.90,1.35 L27.90,6.60 L24.70,6.60 Z" fill="#d4d5e0"/><path d="M27.90,1.35 A5.2,5.2 0 0 1 29.42,10.46 L27.3,8.90 A3.12,3.12 0 0 0 28.10,6.00 Z" fill="#8e90a4"/><rect x="24.70" y="9.42" width="3.2" height="3.88" fill="#c0c2d0"/><rect x="23.2" y="12.3" width="6.2" height="18.3" rx="2.2" fill="#e03c18"/><rect x="24.0" y="13.3" width="1.6" height="16.3" fill="#f87a58" opacity="0.8"/><rect x="27.6" y="13.3" width="1.4" height="16.3" fill="#b02010" opacity="0.8"/></svg></div>
<div class="lb" style="left:315px;top:476px;">Session Settings</div>
<div class="ic" style="left:490px;top:442px"><svg width="32" height="32" viewBox="0 0 32 32"><rect x="2.5" y="4" width="29" height="25.5" rx="1" fill="#1a78e2"/><rect x="2.5" y="4" width="29" height="4.5" rx="1" fill="#0c58c8"/><rect x="4.5" y="8.5" width="25" height="19" fill="#f8faff"/><rect x="4.5" y="20" width="25" height="7.5" fill="#dde8fb" opacity="0.8"/><circle cx="11.3" cy="13.3" r="3.4" fill="#5a5ab0"/><circle cx="10.5" cy="12.5" r="1.5" fill="#8888d8"/><circle cx="11.3" cy="21.3" r="3.2" fill="#ffffff" stroke="#7a78d8" stroke-width="1.3"/><rect x="17" y="11" width="11.5" height="1" fill="#6878c0"/><rect x="17" y="13" width="11.5" height="1" fill="#6878c0"/><rect x="17" y="15" width="11.5" height="1" fill="#6878c0"/><rect x="17" y="19" width="11.5" height="1" fill="#6878c0"/><rect x="17" y="21" width="11.5" height="1" fill="#6878c0"/><rect x="17" y="23" width="11.5" height="1" fill="#6878c0"/></svg></div>
<div class="lb" style="left:426px;top:476px;">Preferences</div>
<div class="ic" style="left:601px;top:442px"><svg width="32" height="32" viewBox="0 0 32 32"><defs><linearGradient id="g_add" x1="0.2" y1="0.1" x2="0.8" y2="0.95"><stop offset="0" stop-color="#ececf4"/><stop offset="0.55" stop-color="#b8bacb"/><stop offset="1" stop-color="#6c6e88"/></linearGradient></defs><polygon points="10.82,10.05 11.15,7.58 13.85,7.58 14.18,10.05 16.70,10.87 18.41,9.06 20.60,10.65 19.41,12.84 20.97,14.98 23.42,14.53 24.26,17.10 22.01,18.18 22.01,20.82 24.26,21.90 23.42,24.47 20.97,24.02 19.41,26.16 20.60,28.35 18.41,29.94 16.70,28.13 14.18,28.95 13.85,31.42 11.15,31.42 10.82,28.95 8.30,28.13 6.59,29.94 4.40,28.35 5.59,26.16 4.03,24.02 1.58,24.47 0.74,21.90 2.99,20.82 2.99,18.18 0.74,17.10 1.58,14.53 4.03,14.98 5.59,12.84 4.40,10.65 6.59,9.06 8.30,10.87" fill="url(#g_add)" stroke="#7a7c96" stroke-width="0.7"/><circle cx="12.5" cy="19.5" r="8.6" fill="url(#g_add)"/><ellipse cx="14.0" cy="17.7" rx="3.4" ry="2.4" fill="#2a2a38"/><ellipse cx="14.0" cy="19.02" rx="2.04" ry="0.72" fill="#f4f4fa"/><path d="M24.40,1.35 A5.2,5.2 0 1 0 27.60,1.35 L27.60,6.60 L24.40,6.60 Z" fill="#d4d5e0"/><path d="M27.60,1.35 A5.2,5.2 0 0 1 29.12,10.46 L27.0,8.90 A3.12,3.12 0 0 0 27.80,6.00 Z" fill="#8e90a4"/><rect x="24.40" y="9.42" width="3.2" height="4.28" fill="#c0c2d0"/><rect x="22.9" y="12.7" width="6.2" height="18.8" rx="2.2" fill="#e03c18"/><rect x="23.7" y="13.7" width="1.6" height="16.8" fill="#f87a58" opacity="0.8"/><rect x="27.299999999999997" y="13.7" width="1.4" height="16.8" fill="#b02010" opacity="0.8"/></svg></div>
<div class="lb" style="left:537px;top:476px;">Add Services</div>
<div class="ic" style="left:712px;top:442px"><svg width="32" height="32" viewBox="0 0 32 32"><path d="M1.5,22 L15.5,18.5 L31,22.5 L16.5,27 Z" fill="#8585e6"/><path d="M1.5,22 L16.5,27 L16.5,30.5 L1.5,25.5 Z" fill="#6d6dc8"/><path d="M16.5,27 L31,22.5 L31,26 L16.5,30.5 Z" fill="#5a5ab2"/><circle cx="29" cy="23.2" r="0.8" fill="#40d040"/><ellipse cx="16.6" cy="9.8" rx="14" ry="8.6" fill="#2a74d8"/><path d="M10,16 L13,24.5 L18,17 Z" fill="#2a74d8"/><ellipse cx="16.6" cy="9.8" rx="12.8" ry="7.5" fill="#c4e2fa"/><path d="M11.2,16 L13.3,22.5 L16.5,16.5 Z" fill="#c4e2fa"/><ellipse cx="14" cy="7.5" rx="8" ry="4" fill="#eaf6ff" opacity="0.8"/><path d="M15,4 L18.2,4 L17.3,12.5 L15.9,12.5 Z" fill="#1a1c48"/><rect x="15.4" y="13.5" width="2.4" height="2.2" rx="1" fill="#1a1c48"/></svg></div>
<div class="lb" style="left:648px;top:476px;">Notifications</div>
<div class="ic" style="left:823px;top:442px"><svg width="32" height="32" viewBox="0 0 32 32"><rect x="1.5" y="1.5" width="25.5" height="24.5" rx="1" fill="#1a78e2"/><rect x="1.5" y="1.5" width="25.5" height="4" rx="1" fill="#0c58c8"/><rect x="3.5" y="5.5" width="21.5" height="18.5" fill="#f8faff"/><circle cx="13.4" cy="16.5" r="6.8" fill="#1a5ac8"/><path d="M9,12 C11,9.5 15,9.5 17,11 C16,13 14,13.5 14,15.5 C15,17 16,19 15,22 C13,20 12,18 10,16.5 C8.5,15 8,13.5 9,12 Z" fill="#2ab02a"/><rect x="15" y="8.5" width="17" height="22.5" fill="#b0b4d0" opacity="0.6"/><rect x="14.5" y="8" width="17" height="22.5" fill="#eef2fe" stroke="#9aa6dc" stroke-width="1"/><rect x="15" y="22" width="16" height="8" fill="#d4dcf8" opacity="0.8"/><rect x="18" y="12.5" width="11.5" height="0.9" fill="#6a7ac0"/><rect x="18" y="14.5" width="11.5" height="0.9" fill="#6a7ac0"/><rect x="18" y="16.5" width="11.5" height="0.9" fill="#6a7ac0"/><rect x="18" y="18.5" width="11.5" height="0.9" fill="#6a7ac0"/><rect x="18" y="20.5" width="11.5" height="0.9" fill="#6a7ac0"/><rect x="18" y="22.5" width="11.5" height="0.9" fill="#6a7ac0"/><rect x="18" y="24.5" width="11.5" height="0.9" fill="#6a7ac0"/><rect x="18" y="26.5" width="11.5" height="0.9" fill="#6a7ac0"/><rect x="18" y="28.5" width="11.5" height="0.9" fill="#6a7ac0"/></svg></div>
<div class="lb" style="left:759px;top:476px;">Action Log</div>
<div class="ic" style="left:268px;top:501px"><svg width="32" height="32" viewBox="0 0 32 32"><path d="M8,9 C9,5 14,5 17.5,6.5 C21,9 24,15 26.5,19 C28,21 31,22 31.5,23.5 L10,31.5 C9,30 10,27 9,24 C7,19 6.5,13 8,9 Z" fill="#f4a418"/><path d="M17.5,6.5 C21,9 24,15 26.5,19 C28,21 31,22 31.5,23.5 L22,27 C22,22 20,13 17.5,6.5 Z" fill="#e48a10"/><path d="M9.5,10 C10,8 12,8 12,10 L11.5,21 C10.5,20 9,14 9.5,10 Z" fill="#fff8d0" opacity="0.9"/><circle cx="11" cy="3.8" r="2.6" fill="#f4b020"/><circle cx="27" cy="28.8" r="2.2" fill="#f4b020"/></svg></div>
<div class="lb" style="left:204px;top:535px;">Event Manager</div>
<div class="ic" style="left:379px;top:501px"><svg width="32" height="32" viewBox="0 0 32 32"><rect x="2.5" y="5" width="25.5" height="26" rx="3" fill="#7078c8"/><rect x="3.5" y="6" width="23.5" height="24" rx="2" fill="#b4b8f4"/><rect x="4" y="6.5" width="4" height="23" fill="#e4e6ff"/><rect x="4" y="25.5" width="23" height="4.5" fill="#8890e0"/><rect x="8" y="6.5" width="19" height="19" fill="#c8ccfa"/><path d="M22.70,1.45 A5.3,5.3 0 1 0 25.90,1.45 L25.90,6.80 L22.70,6.80 Z" fill="#d4d5e0"/><path d="M25.90,1.45 A5.3,5.3 0 0 1 27.48,10.74 L25.3,9.15 A3.1799999999999997,3.1799999999999997 0 0 0 26.10,6.20 Z" fill="#8e90a4"/><rect x="22.70" y="9.68" width="3.2" height="4.02" fill="#c0c2d0"/><rect x="21.2" y="12.7" width="6.2" height="18.8" rx="2.2" fill="#e03c18"/><rect x="22.0" y="13.7" width="1.6" height="16.8" fill="#f87a58" opacity="0.8"/><rect x="25.6" y="13.7" width="1.4" height="16.8" fill="#b02010" opacity="0.8"/></svg></div>
<div class="lb" style="left:315px;top:535px;">Custom Buttons</div>
<div class="ic" style="left:490px;top:501px"><svg width="32" height="32" viewBox="0 0 32 32"><path d="M1.5,2 L27.5,9.5 L27.5,28 L1.5,31.5 Z" fill="#1a7ae4"/><path d="M5,9 L25,13.5 L25,26 L5,26.5 Z" fill="#f8faff"/><path d="M12,11 L25,13.5 L25,26 L12,26.3 Z" fill="#dde6fa"/><rect x="17.5" y="21" width="5" height="0.8" fill="#8090c8"/><rect x="17.5" y="23" width="5" height="0.8" fill="#8090c8"/><path d="M31,3 C28,4 20,9 15,16 L17.5,18 C24,13 29.5,7 31,3 Z" fill="#28a828"/><path d="M31,3 C28,4 21,9 16,15.5 L17,16 C23,11 28.5,6 31,3 Z" fill="#70e060" opacity="0.9"/><path d="M15,16 L17.5,18 L16,19.5 L13.5,17.5 Z" fill="#303048"/><path d="M13.5,17 L15.5,19.5 C13,22 9,23.5 6.5,22.5 C6,20 8,16 10,15.5 C11.5,15 12.5,16 13.5,17 Z" fill="#e82e10"/><path d="M8,19 C9,16.5 11,16 12.5,17 C11.5,19 10,20 8,19 Z" fill="#f8a030"/></svg></div>
<div class="lb" style="left:426px;top:535px;">Skins</div>
<div class="ic" style="left:268px;top:611px"><svg width="32" height="32" viewBox="0 0 32 32"><rect x="2" y="10" width="30" height="22" fill="#b0b4d0" opacity="0.5"/><rect x="1.5" y="9" width="29.5" height="21.5" fill="#f4f8ff" stroke="#9aaae0" stroke-width="1"/><rect x="2" y="22" width="28.5" height="8" fill="#dde6fa" opacity="0.8"/><rect x="5" y="13.5" width="8" height="1" fill="#7080c0"/><rect x="5" y="16.5" width="7" height="1" fill="#7080c0"/><rect x="5" y="19.5" width="6" height="1" fill="#7080c0"/><rect x="5" y="22.5" width="5" height="1" fill="#7080c0"/><path d="M15,27.5 C14.5,22.5 18,21 22,21 C26,21 29.5,22.5 29,27.5 Z" fill="#1a58c8"/><path d="M21,21.2 L23,21.2 L22,25 Z" fill="#c0e0ff"/><circle cx="22.1" cy="17" r="4.4" fill="#e8b830"/><circle cx="22" cy="18.3" r="3.2" fill="#f8d070"/><path d="M28.6,0.8 L32,4.2 L8,28 L3.5,28.8 L4.6,24.5 Z" fill="#a4a4e4"/><path d="M32,4.2 L8,28 L6.5,26.5 L30.3,2.5 Z" fill="#7474c0" opacity="0.7"/><path d="M27,2.4 L28.6,0.8 L32,4.2 L30.4,5.8 Z" fill="#f0c020"/><path d="M16.2,13 L19.6,16.4 L21.6,14.4 L18.2,11 Z" fill="#f0c020"/><path d="M3.5,28.8 L4.6,24.5 L7.8,27.8 Z" fill="#404060"/></svg></div>
<div class="lb" style="left:204px;top:645px;">Edit</div>
<div class="ic" style="left:379px;top:611px"><svg width="32" height="32" viewBox="0 0 32 32"><path d="M5.8,13 L11.5,13 L11.5,31 L8.6,32 L5.8,31 Z" fill="#aeb1e0" stroke="#6a6ea6" stroke-width="0.7"/><rect x="6.5" y="13" width="1.3" height="17.5" fill="#dcdef8"/><circle cx="8.5" cy="8" r="7" fill="#c4c6e8" stroke="#7074aa" stroke-width="0.8"/><circle cx="7.6" cy="7" r="4.5" fill="#e2e2f8"/><circle cx="7.9" cy="5.9" r="1.3" fill="#2a2a40"/><path d="M21.5,1.2 L28.8,1.2 L28.8,19 L21.5,19 L21.5,16 L20,15 L21.5,14 L21.5,12 L20,11 L21.5,10 Z" fill="#e4aa18" stroke="#a87808" stroke-width="0.6"/><rect x="23.5" y="1.5" width="1.2" height="17" fill="#b88010"/><rect x="26" y="1.5" width="1.3" height="17" fill="#f8d860"/><circle cx="24.7" cy="24.7" r="6.8" fill="#e4aa18" stroke="#a87808" stroke-width="0.6"/><circle cx="23.8" cy="23.5" r="4.2" fill="#f4d060" opacity="0.8"/><circle cx="25.5" cy="27.5" r="1.1" fill="#303040"/><path d="M2.5,23.5 C5,17 10.5,14.5 17.5,14.8 L17.5,8.5 L24.8,14.5 L17.5,21 L17.5,17.8 C11.5,17.8 6.5,19.5 2.5,23.5 Z" fill="#2a7ae2" stroke="#1a50b0" stroke-width="0.6"/><path d="M4,21 C7,17.5 11,16 17.5,15.8" fill="none" stroke="#70b8f8" stroke-width="1"/></svg></div>
<div class="lb" style="left:315px;top:645px;">Change Password</div>
<div class="ic" style="left:490px;top:611px"><svg width="32" height="32" viewBox="0 0 32 32"><rect x="1" y="3" width="19" height="26" rx="1" fill="#1a78e2"/><rect x="1" y="3" width="19" height="4" rx="1" fill="#0c58c8"/><rect x="3" y="7.5" width="15" height="19.5" fill="#f8faff"/><rect x="5" y="9.5" width="8" height="6.5" fill="#2a90f0" stroke="#b8c0f0" stroke-width="0.8"/><rect x="5" y="17" width="8" height="3" fill="#a8acf0"/><rect x="8.5" y="20" width="1" height="4" fill="#6080d0"/><rect x="4.5" y="24" width="10" height="1.6" fill="#8090c0"/><path d="M18,20 L21,20 L21.5,31.5 L18.5,31.5 Z" fill="#9ea2d8" stroke="#6a6ea6" stroke-width="0.6"/><ellipse cx="18.6" cy="13" rx="4.2" ry="6.5" fill="none" stroke="#9a9ed6" stroke-width="2.2"/><ellipse cx="18.6" cy="13" rx="4.2" ry="6.5" fill="none" stroke="#6a6ea6" stroke-width="0.5"/><path d="M22.6,14 L27.4,14 L27.4,31.5 L22.6,31.5 Z" fill="#b4b8e6" stroke="#6a6ea6" stroke-width="0.7"/><rect x="23.3" y="14.5" width="1.2" height="16.5" fill="#e0e2fa"/><ellipse cx="25.7" cy="8.6" rx="5.6" ry="7.4" fill="#c8cae8" stroke="#7074aa" stroke-width="0.8"/><ellipse cx="25.2" cy="8" rx="3.2" ry="4.8" fill="none" stroke="#8a8ec4" stroke-width="1.3"/><ellipse cx="24.5" cy="6.5" rx="2" ry="2.5" fill="#eeeefc" opacity="0.8"/></svg></div>
<div class="lb" style="left:426px;top:645px;">Access</div>
<div class="ic" style="left:717px;top:611px"><svg width="32" height="32" viewBox="0 0 32 32"><rect x="4" y="4" width="26.5" height="26.5" rx="3" fill="#606060" opacity="0.5"/><rect x="3" y="3" width="26.5" height="26.5" rx="3" fill="#ffffff"/><rect x="3.8" y="3.8" width="25" height="25" rx="2.5" fill="#10a010"/><path d="M5,5 L22,5 L5,22 Z" fill="#50c840" opacity="0.7"/><circle cx="16.3" cy="16.3" r="4" fill="#22b020"/><g stroke="#ffffff" stroke-width="1.8"><path d="M16.3,7 L16.3,11.5 M16.3,21 L16.3,25.5 M7,16.3 L11.5,16.3 M21,16.3 L25.5,16.3 M9.8,9.8 L13,13 M19.6,19.6 L22.8,22.8 M22.8,9.8 L19.6,13 M13,19.6 L9.8,22.8"/></g></svg></div>
<div class="lb" style="left:653px;top:645px;">Reboot</div>
<div class="ic" style="left:828px;top:611px"><svg width="32" height="32" viewBox="0 0 32 32"><rect x="4" y="4" width="26.5" height="26.5" rx="3" fill="#606060" opacity="0.5"/><rect x="3" y="3" width="26.5" height="26.5" rx="3" fill="#ffffff"/><rect x="3.8" y="3.8" width="25" height="25" rx="2.5" fill="#f8501e"/><path d="M5,5 L22,5 L5,22 Z" fill="#f87a50" opacity="0.6"/><circle cx="16.3" cy="16.3" r="7.2" fill="none" stroke="#ffffff" stroke-width="1.3"/><rect x="15.4" y="12.8" width="1.8" height="7" fill="#ffffff"/></svg></div>
<div class="lb" style="left:764px;top:645px;">Shut Down</div>
</body></html>
